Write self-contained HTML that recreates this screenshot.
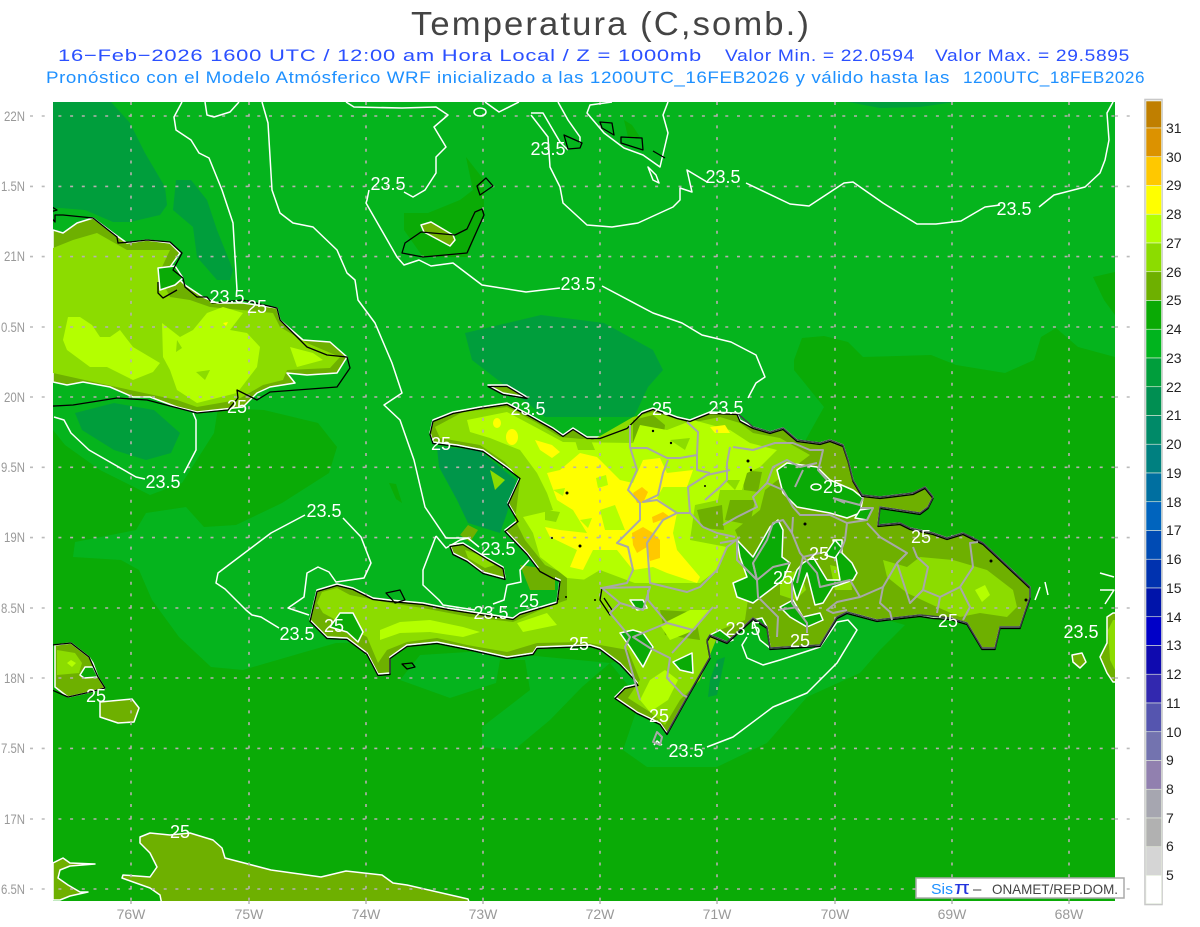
<!DOCTYPE html>
<html><head><meta charset="utf-8"><title>Temperatura</title>
<style>
html,body{margin:0;padding:0;background:#fff;width:1200px;height:927px;overflow:hidden}
svg{display:block;position:absolute;left:0;top:0}
text{font-family:"Liberation Sans",sans-serif}
.w text,.w{fill:#fff;font-size:18px;text-anchor:middle}
.c{fill:none;stroke:#fff;stroke-width:1.5;stroke-linejoin:round}
.f{stroke:#fff;stroke-width:1.5;stroke-linejoin:round}
.k{fill:none;stroke:#000;stroke-width:1.3;stroke-linejoin:round}
.b{fill:none;stroke:#a8a8a8;stroke-width:2;stroke-linejoin:round}
.ax{fill:#999;font-size:14px}
.cb{fill:#222;font-size:14px}
</style></head><body>
<svg width="1200" height="927" viewBox="0 0 1200 927" xmlns="http://www.w3.org/2000/svg">
<defs>
<clipPath id="m"><rect x="53" y="102" width="1062" height="799"/></clipPath>
<path id="hisp" d="M430 433L433 420 453 412 480 407 507 403 530 415 553 428 563 435 573 428 587 437 600 437 627 427 642 412 653 408 677 417 690 420 710 412 737 413 740 420 753 427 770 432 783 428 797 440 820 443 830 440 843 445 848 460 853 480 862 495 880 497 913 493 925 487 933 497 928 507 920 513 880 507 878 525 900 523 910 528 933 533 947 538 963 533 983 543 1030 587 1030 597 1020 627 1000 627 995 648 982 648 967 623 950 618 933 617 920 615 893 618 877 620 847 612 837 617 820 645 770 648 767 627 753 618 727 642 710 635 707 640 710 657 687 697 667 733 660 723 637 712 615 697 625 687 638 684 633 677 620 663 600 648 590 645 537 647 533 653 507 657 467 648 437 642 407 645 390 657 390 673 378 674 367 653 347 638 327 637 310 620 317 590 337 584 353 588 373 598 390 600 423 603 447 608 473 612 513 618 520 613 557 602 560 580 553 577 540 570 527 553 505 530 518 520 508 503 520 477 507 467 483 450 457 445 433 442Z"/>
<path id="cuba" d="M53 230L63 233 77 223 93 218 113 233 127 243 147 240 170 243 180 253 170 267 177 277 185 285 203 297 217 303 243 303 277 308 280 320 303 340 330 342 347 357 337 373 307 375 287 373 295 383 270 387 257 393 243 407 197 412 177 407 150 397 133 397 110 387 83 382 67 385 53 382Z"/>
</defs>
<rect width="1200" height="927" fill="#fff"/>
<g clip-path="url(#m)">
<rect x="53" y="102" width="1062" height="799" fill="#0AAB06"/>
<!-- lighter 23-24 -->
<path fill="#05B41D" d="M53 102L1115 102 1115 357 1078 347 1056 328 1041 337 1034 360 1005 373 956 365 931 355 863 357 848 342 824 336 802 338 794 360 794 370 824 407 800 450 700 620 640 640 500 640 336 643 243 670 211 667 179 637 152 600 139 570 121 560 73 557 75 542 136 530 146 513 186 507 204 527 236 525 282 503 329 473 337 447 318 423 264 410 218 408 214 433 182 483 150 495 100 470 65 445 53 430Z"/>
<path fill="#05B41D" d="M400 680L420 655 500 650 525 655 610 663 640 700 623 750 647 767 717 767 767 743 807 697 860 673 880 650 905 625 860 612 700 640 610 663 582 687 550 720 514 750 482 747 482 727 530 690 525 660 500 660 496 683 450 698Z"/>
<path fill="#0AAB06" d="M1093 277L1115 272 1115 315 1104 300ZM389 483L396 484 402 503 396 499ZM466 157L484 180 484 215 467 257 423 257 404 230 404 213 428 213 460 200 473 190ZM624 120L632 125 640 137 628 137Z"/>
<!-- 22-23 -->
<path fill="#009E3C" d="M53 102L111 102 130 123 145 153 165 187 167 205 160 215 130 222 113 222 85 210 60 208 53 208Z"/>
<path fill="#009E3C" d="M176 180L191 180 207 200 217 230 233 270 230 280 217 280 197 257 193 227 173 210Z"/>
<path fill="#009E3C" d="M75 413L114 403 154 410 180 433 171 453 146 460 114 450 82 430Z"/>
<path fill="#009E3C" d="M465 333L541 315 604 323 653 350 663 370 648 387 634 417 545 417 507 387 472 360Z"/>
<path fill="#00964A" d="M437 447L479 450 516 480 507 513 500 533 468 523 457 500 439 467Z"/>
<path fill="#009E3C" d="M717 660L725 657 717 695 708 697 710 680ZM848 102L955 102 920 107 880 108Z"/>
<!-- level 25 -->
<g fill="#6EB000" class="f">
<use href="#hisp"/><use href="#cuba"/>
<path d="M450 545L463 543 487 558 503 567 505 578 483 572 467 560 453 553Z"/>
<path d="M488 385L507 385 527 397 503 393Z"/>
<path d="M421 225L431 222 453 235 455 240 450 246 424 232Z"/>
<path d="M55 645L71 643 89 657 93 663 98 677 105 688 86 693 68 697 55 687Z"/>
<path d="M100 702L132 699 139 708 134 722 118 723 100 717Z"/>
<path d="M140 837L150 833 170 835 190 833 213 840 222 848 225 858 271 870 321 877 346 871 382 875 393 883 407 885 468 899 470 905 162 905 160 895 150 888 122 878 123 875 150 877 157 867 150 853 140 843Z"/>
<path d="M53 863L63 858 70 863 95 864 70 866 60 870 58 878 68 885 80 892 88 892 70 896 60 900 53 900Z"/>
<path d="M1118 613L1113 613 1107 617 1107 643 1100 657 1107 673 1113 682 1118 682Z"/>
<path d="M1072 655L1082 653 1086 662 1080 668 1073 662Z"/>
</g>
<!-- level 26 -->
<g fill="#8CDC00">
<path d="M53 248L73 240 97 233 127 250 170 250 162 267 163 283 170 297 190 300 210 307 273 313 280 327 307 343 340 357 330 368 287 370 283 380 263 385 237 400 197 407 177 400 130 390 53 373Z"/>
<path d="M435 427L463 412 507 407 537 423 560 437 593 440 633 417 653 412 690 423 720 417 740 423 753 433 780 438 810 455 790 470 765 490 760 510 735 530 745 555 750 585 745 620 720 630 700 680 680 700 665 725 650 712 628 698 640 680 628 650 583 642 537 643 507 652 467 645 437 638 407 642 387 650 378 663 367 637 323 613 317 603 322 592 337 588 350 595 390 603 423 608 470 617 513 622 547 607 567 600 567 575 545 565 525 540 515 520 520 480 505 462 480 445 440 438Z"/>
<path d="M883 560L907 567 920 557 953 560 987 570 1013 590 1017 607 1007 617 980 613 960 617 937 607 907 593 887 577Z"/>
<path d="M57 650L75 653 82 663 79 673 57 675Z"/>
<path d="M1113 620L1108 630 1110 660 1115 670 1118 670 1118 620Z"/>
<path d="M780 575L800 570 806 590 795 600 780 595ZM830 565L850 570 852 590 835 590ZM465 550L480 555 495 565 485 568 468 558Z"/>
</g>
<!-- level 25 patches atop 26 -->
<path fill="#6EB000" d="M633 420L653 415 665 425 663 443 645 445 633 443ZM468 525L478 530 470 542 460 535ZM745 535L765 530 765 560 745 560ZM730 500L755 500 750 525 725 520ZM520 565L555 570 555 590 530 590ZM660 610L695 612 700 640 665 635ZM697 510L722 505 724 530 702 528ZM742 470L762 472 758 492 744 490Z"/>
<!-- level 27 -->
<g fill="#B4FF00">
<path d="M68 317L80 317 92 325 100 337 110 337 120 330 133 347 160 363 153 372 133 380 107 367 90 367 67 350 63 340Z"/>
<path d="M162 323L180 337 193 330 207 313 223 307 243 313 230 330 247 333 260 347 257 367 237 393 197 403 177 390 170 370 163 357Z"/>
<path d="M290 347L313 353 323 360 297 367Z"/>
<path d="M467 420L507 412 537 428 563 442 633 443 640 425 667 430 693 420 730 430 750 443 777 450 760 467 747 473 742 490 720 490 718 500 695 505 690 540 727 547 717 570 700 583 653 583 620 583 567 578 553 567 540 557 533 533 523 517 553 510 547 493 537 473 520 450 490 438 470 432Z"/>
<path d="M380 630L400 622 430 620 463 627 480 632 463 637 430 632 400 633 380 640ZM517 623L547 613 557 625 523 632Z"/>
<path d="M975 590L985 585 990 595 982 602ZM71 660L76 663 72 667 67 663Z"/>
<path d="M640 700L650 680 665 670 678 680 668 700 650 712Z"/>
<path d="M660 625L690 610 710 610 695 630 670 640Z"/>
</g>
<!-- 26 holes inside 27 -->
<path fill="#8CDC00" d="M150 320L156 326 152 333ZM177 340L182 348 176 352ZM196 372L210 370 205 380ZM575 440L590 438 595 450 578 450ZM595 478L603 474 605 485 597 485ZM545 510L560 512 556 522 545 520ZM590 520L605 520 600 535ZM670 440L690 438 685 450ZM725 480L740 480 735 490ZM600 570L640 585 600 592 575 585ZM490 470L505 480 495 490Z"/>
<!-- level 28 -->
<g fill="#FFFF00">
<path d="M547 473L560 470 580 453 597 457 620 480 633 483 643 460 660 458 667 473 693 470 687 487 663 487 657 498 677 513 673 533 677 550 700 577 697 583 667 573 653 567 633 570 617 550 593 550 583 570 570 567 577 550 550 537 545 527 560 530 587 533 573 510 557 500Z"/>
<ellipse cx="497" cy="423" rx="4" ry="5"/><ellipse cx="512" cy="437" rx="6" ry="8"/><path d="M535 440L552 445 560 452 552 458 540 450Z"/><path d="M710 427L725 425 730 433 715 433Z"/><path d="M223 323L228 322 226 326Z"/>
</g>
<path fill="#B4FF00" d="M596 478L606 475 608 485 598 488ZM600 510L615 505 625 530 605 530ZM553 490L565 488 563 496ZM580 520L592 518 588 528Z"/>
<!-- level 29 -->
<path fill="#FFC800" d="M633 493L642 487 648 492 643 503 637 503ZM652 517L663 512 670 517 653 523ZM632 533L643 527 653 533 660 540 660 558 650 561 647 547 637 553 633 545Z"/>
<!-- holes green -->
<g fill="#0AAB06" class="f">
<path d="M777 470L787 463 817 467 830 480 853 490 863 498 860 513 847 518 830 513 797 507 783 493Z"/>
<path d="M737 540L753 557 770 527 778 520 783 530 782 557 790 563 783 580 770 590 753 603 737 597 733 583 747 577 740 557Z"/>
<path d="M803 563L813 557 827 580 840 580 833 540 842 540 842 553 852 563 857 573 853 580 833 587 823 603 815 605 807 573 797 600 792 583 797 570Z"/>
<path d="M780 607L793 600 803 617 820 613 823 620 807 627 790 617Z"/>
<path d="M340 613L353 613 363 632 358 642 347 632 330 627Z"/>
<path d="M620 633L633 630 643 633 653 647 643 667 630 647Z"/>
<path d="M673 662L692 653 693 673 680 670Z"/>
<path d="M630 600L643 600 647 608 637 610Z"/>
<path d="M710 635L720 630 733 640 727 642Z"/>
<path d="M753 620L762 618 767 627 770 648 760 640Z"/>
<path d="M85 667L93 667 98 677 84 678 80 675Z"/>
<ellipse cx="816" cy="487" rx="5" ry="3"/>
<path d="M860 510L873 508 867 520 855 518Z"/>
<path d="M825 555L835 540 842 548 835 558Z"/>
<path d="M158 268L175 266 183 278 175 285 160 290Z"/>
</g>
<!-- grid -->
<g fill="none" stroke="#b8b0b0" stroke-width="1.6" stroke-dasharray="3 8.7">
<path d="M35 116H1135M35 186.4H1135M35 256.6H1135M35 327H1135M35 397H1135M35 467.3H1135M35 537.6H1135M35 608H1135M35 678H1135M35 748.4H1135M35 819H1135M35 889H1135"/>
<path d="M131 102V905M249 102V905M366 102V905M483 102V905M600 102V905M717 102V905M835 102V905M952 102V905M1069 102V905"/>
</g>
<!-- contours -->
<g class="c">
<path d="M182 102L174 117 176 130 191 140 199 153 209 158 222 190 233 223 237 290"/>
<path d="M205 102L207 115 214 117 230 112 239 102"/>
<path d="M262 102L268 123 272 190 280 213 293 223 313 227 337 250 347 273 355 280 358 300 375 323 392 363 402 393 384 405 400 420 414 460 425 507 446 538 468 538 479 547"/>
<path d="M436 536L423 570 423 585 439 600 443 605 475 610M436 536L446 548 460 540 468 538M529 560L520 570 521 582 507 585 504 600 493 604"/>
<path d="M346 102L354 107 402 108 436 107 448 115 434 127 446 147 436 157 436 173 425 190 413 197 404 192"/>
<path d="M369 190L367 200 366 203 397 257 404 265 419 260 431 266 453 263 482 285 526 292 560 288"/>
<path d="M602 286L653 313 682 323 702 335 731 342 756 355 765 377 756 383 748 398"/>
<path d="M485 102L499 112 519 102"/><ellipse cx="480" cy="112" rx="6" ry="4"/>
<path d="M531 113L543 113 560 142 568 150M531 115L548 137 550 167 560 187 563 203 587 225 612 227 638 223 673 207 680 200 680 188 692 192 687 170 707 182"/>
<path d="M746 183L790 204 809 206 844 183 853 182 883 203 917 224 936 224 961 221 985 207 1000 205"/>
<path d="M1039 207L1054 195 1085 187 1100 173 1105 160 1109 140 1107 113 1113 102"/>
<path d="M558 102L568 120 580 137 580 143"/>
<path d="M612 102L590 105 587 113 604 133 624 148 643 155 660 167 668 133 663 115 668 102"/>
<path d="M648 167L656 175 659 183 653 180Z"/>
<path d="M54 417L64 420 71 433 89 450 136 477 145 479"/>
<path d="M184 473L196 450 196 420 193 413"/>
<path d="M305 515L271 533 218 573 216 583 225 589 246 610 252 615 261 617 279 628"/>
<path d="M343 518L361 537 371 563 364 578 350 580 336 582 329 572 318 567 307 573 304 597 288 608 309 615"/>
<path d="M707 747L733 737 773 707 807 693 837 663 857 630 848 620 837 622 820 647 780 660 763 665 747 658 742 645 747 637"/>
<path d="M662 745L657 741 654 745"/>
<path d="M1040 587L1035 600M1045 582L1048 595"/>
<path d="M1100 573L1114 577M1100 590L1114 590 1105 604"/>
</g>
<!-- coast black -->
<g class="k" transform="translate(0,1.5)">
<use href="#hisp"/>
<path d="M450 545L463 543 487 558 503 567 505 578 483 572 467 560 453 553Z"/>
<path d="M488 385L507 385 527 397 503 393Z"/>
</g>
<g class="k">
<path d="M35 202L45 203 57 210 47 213 55 222 55 215 63 215 93 218 117 237 118 243 130 242 147 240 170 242 182 253 173 270 183 278 185 287 197 297 207 297 212 303 243 300 277 308 280 320 307 347 327 355 347 357 350 368 337 387 270 392 257 400 237 390 238 398 228 410 197 413 147 400 117 398 73 405 35 407"/>
<path d="M158 282L158 293 163 298 177 290"/>
<path d="M564 135L582 143 580 148 568 149ZM600 122L612 123 614 135 602 128ZM621 137L642 138 643 150 621 143ZM653 151L665 158"/>
<path d="M486 178L493 186 480 195 477 186Z"/>
<path d="M482 209L484 215 467 253 423 257 402 253 405 243 421 232 455 235 467 229 475 212Z"/>
<path d="M402 664L412 663 415 667 407 669Z"/>
<path d="M35 632L45 640 52 645 71 643 89 657 98 677 105 688 86 693 68 697 52 690 40 680 35 683"/>
<path d="M386 593L400 590 405 600 395 603Z"/>
<path d="M602 588L600 600 610 615 612 610 604 598"/>
</g>
<path fill="none" stroke="#40404c" stroke-width="1.4" d="M737 413L753 427 770 432 783 428 797 440 820 443 830 440 843 445 848 460 853 480 862 495 880 497 913 493 925 487 933 497 928 507 920 513 880 507 878 525 900 523 910 528 933 533 947 538 963 533 983 543 1030 587 1030 597 1020 627 1000 627 995 648 982 648 967 623 950 618 920 615 893 618 877 620 847 612 837 617 820 645 770 648 767 627 753 618 727 642 710 635 707 640 710 657 687 697 667 733"/>
<!-- borders -->
<g class="b">
<path d="M630 425L630 447 637 470 628 490 640 503 640 520 617 543 628 547 633 570 627 583 602 588 620 603 610 613 620 625 630 637 625 647 633 675 640 700"/>
<path d="M630 448L647 448 667 458 680 458 697 455 698 432 687 422M668 460L663 473 658 495 643 502 657 500 677 513 690 513 688 487 707 475 730 470M697 455L697 470 710 473"/>
<path d="M677 513L663 520 647 543 650 583 687 592 700 587 717 570 727 547 740 537M690 513L703 527 717 533 735 537M600 588L650 587 643 610 620 603"/>
<path d="M733 447L753 450 775 443 793 443 810 450 823 450 820 463 818 470 827 480M730 447L727 463 727 480 720 487M773 467L787 460 800 467 817 463M773 467L767 483 753 497 757 507 737 517 723 525M767 483L783 490 793 507 800 515 830 515 847 523M803 470L795 487"/>
<path d="M833 498L860 505 863 498M860 508L873 508 867 520 847 523 845 540 840 553M867 523L880 537 907 553 897 563 883 587 880 603 890 612 892 620M913 547L917 557 928 567 923 590 910 603 897 563M923 590L940 597 937 613M940 597L960 587 973 567 970 543 978 542M960 587L970 607 963 620"/>
<path d="M883 587L860 597 850 580 820 587 817 573 800 553 792 533 783 520 773 523 767 540 753 563 757 580 773 567 790 563M860 597L837 602 827 610 833 613 847 610M793 517L792 533M820 553L803 557 797 583"/>
<path d="M753 563L757 580 758 597 778 617 777 637M737 540L737 560 757 580M720 543L737 540M792 580L792 603 807 623 807 633M778 610L798 607"/>
<path d="M648 590L648 600 667 623 693 630 713 607M667 623L633 637 650 648 670 658 667 678 683 695 687 697M693 630L672 653"/>
<path d="M653 742L657 732 662 737 660 745Z"/>
<path d="M833 498L845 503M720 487L705 500"/>
</g>
<!-- dots -->
<g fill="#000"><circle cx="567" cy="493" r="1.5"/><circle cx="580" cy="546" r="1.5"/><circle cx="552" cy="538" r="1"/><circle cx="653" cy="431" r="1.2"/><circle cx="671" cy="443" r="1.2"/><circle cx="705" cy="486" r="1"/><circle cx="748" cy="461" r="1.5"/><circle cx="751" cy="470" r="1.2"/><circle cx="805" cy="524" r="1.5"/><circle cx="991" cy="561" r="1.5"/><circle cx="1026" cy="600" r="1.5"/><circle cx="558" cy="599" r="1"/><circle cx="566" cy="597" r="1"/><circle cx="595" cy="600" r="1"/></g>
<!-- value labels -->
<g class="w">
<text x="548" y="155">23.5</text><text x="388" y="190">23.5</text><text x="723" y="183">23.5</text><text x="1014" y="215">23.5</text><text x="578" y="290">23.5</text><text x="227" y="303">23.5</text><text x="528" y="415">23.5</text><text x="726" y="414">23.5</text><text x="163" y="488">23.5</text><text x="324" y="517">23.5</text><text x="498" y="555">23.5</text><text x="491" y="619">23.5</text><text x="297" y="640">23.5</text><text x="743" y="635">23.5</text><text x="1081" y="638">23.5</text><text x="686" y="757">23.5</text>
<text x="257" y="313">25</text><text x="237" y="413">25</text><text x="441" y="450">25</text><text x="662" y="415">25</text><text x="833" y="493">25</text><text x="921" y="543">25</text><text x="819" y="560">25</text><text x="783" y="584">25</text><text x="529" y="607">25</text><text x="334" y="632">25</text><text x="579" y="650">25</text><text x="948" y="627">25</text><text x="800" y="647">25</text><text x="96" y="702">25</text><text x="659" y="722">25</text><text x="180" y="838">25</text>
</g>
</g>
<!-- titles -->
<text x="411" y="35" font-size="33" fill="#444" letter-spacing="2" textLength="400" lengthAdjust="spacingAndGlyphs">Temperatura (C,somb.)</text>
<g font-size="17" fill="#2b50ff" letter-spacing="0.6">
<text x="58" y="61" textLength="644" lengthAdjust="spacingAndGlyphs">16−Feb−2026 1600 UTC / 12:00 am Hora Local / Z = 1000mb</text>
<text x="725" y="61" textLength="190" lengthAdjust="spacingAndGlyphs">Valor Min. = 22.0594</text>
<text x="935" y="61" textLength="195" lengthAdjust="spacingAndGlyphs">Valor Max. = 29.5895</text>
</g>
<g font-size="16.5" fill="#1e90ff" letter-spacing="0.5">
<text x="46" y="83" textLength="904" lengthAdjust="spacingAndGlyphs">Pronóstico con el Modelo Atmósferico WRF inicializado a las 1200UTC_16FEB2026 y válido hasta las</text>
<text x="963" y="83" textLength="182" lengthAdjust="spacingAndGlyphs">1200UTC_18FEB2026</text>
</g>
<!-- outer grid dots -->
<g fill="none" stroke="#bbb" stroke-width="1.6" stroke-dasharray="3 8.7">
<path d="M30 116H53M30 186.4H53M30 256.6H53M30 327H53M30 397H53M30 467.3H53M30 537.6H53M30 608H53M30 678H53M30 748.4H53M30 819H53M30 889H53"/>
<path d="M1115 116H1135M1115 186.4H1135M1115 256.6H1135M1115 327H1135M1115 397H1135M1115 467.3H1135M1115 537.6H1135M1115 608H1135M1115 678H1135M1115 748.4H1135M1115 819H1135M1115 889H1135"/>
<path d="M131 901V907M249 901V907M366 901V907M483 901V907M600 901V907M717 901V907M835 901V907M952 901V907M1069 901V907"/>
</g>
<!-- axis labels -->
<g class="ax">
<text x="4" y="121" textLength="21" lengthAdjust="spacingAndGlyphs">22N</text><text x="1" y="191" textLength="24" lengthAdjust="spacingAndGlyphs">1.5N</text><text x="4" y="261" textLength="21" lengthAdjust="spacingAndGlyphs">21N</text><text x="1" y="332" textLength="24" lengthAdjust="spacingAndGlyphs">0.5N</text><text x="4" y="402" textLength="21" lengthAdjust="spacingAndGlyphs">20N</text><text x="1" y="472" textLength="24" lengthAdjust="spacingAndGlyphs">9.5N</text><text x="4" y="542" textLength="21" lengthAdjust="spacingAndGlyphs">19N</text><text x="1" y="613" textLength="24" lengthAdjust="spacingAndGlyphs">8.5N</text><text x="4" y="683" textLength="21" lengthAdjust="spacingAndGlyphs">18N</text><text x="1" y="753" textLength="24" lengthAdjust="spacingAndGlyphs">7.5N</text><text x="4" y="824" textLength="21" lengthAdjust="spacingAndGlyphs">17N</text><text x="1" y="894" textLength="24" lengthAdjust="spacingAndGlyphs">6.5N</text>
</g>
<g class="ax" text-anchor="middle">
<text x="131" y="919">76W</text><text x="249" y="919">75W</text><text x="366" y="919">74W</text><text x="483" y="919">73W</text><text x="600" y="919">72W</text><text x="717" y="919">71W</text><text x="835" y="919">70W</text><text x="952" y="919">69W</text><text x="1069" y="919">68W</text>
</g>
<!-- colorbar -->
<rect x="1145" y="99.5" width="17" height="805" fill="#fff" stroke="#c8c8c8" stroke-width="1.6"/>
<g stroke="#e8f0e0" stroke-width=".6">
<rect x="1146" y="101" width="15.5" height="27" fill="#C07F00"/>
<rect x="1146" y="128" width="15.5" height="28.75" fill="#DC9200"/>
<rect x="1146" y="156.75" width="15.5" height="28.75" fill="#FFC800"/>
<rect x="1146" y="185.5" width="15.5" height="28.75" fill="#FFFF00"/>
<rect x="1146" y="214.25" width="15.5" height="28.75" fill="#B4FF00"/>
<rect x="1146" y="243" width="15.5" height="28.75" fill="#8CDC00"/>
<rect x="1146" y="271.75" width="15.5" height="28.75" fill="#6EB000"/>
<rect x="1146" y="300.5" width="15.5" height="28.75" fill="#0AAA05"/>
<rect x="1146" y="329.25" width="15.5" height="28.75" fill="#00B41E"/>
<rect x="1146" y="358" width="15.5" height="28.75" fill="#009E3C"/>
<rect x="1146" y="386.75" width="15.5" height="28.75" fill="#008F52"/>
<rect x="1146" y="415.5" width="15.5" height="28.75" fill="#008A68"/>
<rect x="1146" y="444.25" width="15.5" height="28.75" fill="#008080"/>
<rect x="1146" y="473" width="15.5" height="28.75" fill="#006FA0"/>
<rect x="1146" y="501.75" width="15.5" height="28.75" fill="#0064BE"/>
<rect x="1146" y="530.5" width="15.5" height="28.75" fill="#004BB4"/>
<rect x="1146" y="559.25" width="15.5" height="28.75" fill="#0032AF"/>
<rect x="1146" y="588" width="15.5" height="28.75" fill="#0014AA"/>
<rect x="1146" y="616.75" width="15.5" height="28.75" fill="#0000C8"/>
<rect x="1146" y="645.5" width="15.5" height="28.75" fill="#0F0AAF"/>
<rect x="1146" y="674.25" width="15.5" height="28.75" fill="#3228AF"/>
<rect x="1146" y="703" width="15.5" height="28.75" fill="#5555AF"/>
<rect x="1146" y="731.75" width="15.5" height="28.75" fill="#7373AF"/>
<rect x="1146" y="760.5" width="15.5" height="28.75" fill="#9180AF"/>
<rect x="1146" y="789.25" width="15.5" height="28.75" fill="#A6A6B0"/>
<rect x="1146" y="818" width="15.5" height="28.75" fill="#B1B1B1"/>
<rect x="1146" y="846.75" width="15.5" height="28.75" fill="#D5D5D5"/>
<rect x="1146" y="875.5" width="15.5" height="28" fill="#fff"/>
</g>
<g class="cb">
<text x="1166" y="133">31</text><text x="1166" y="162">30</text><text x="1166" y="190">29</text><text x="1166" y="219">28</text><text x="1166" y="248">27</text><text x="1166" y="277">26</text><text x="1166" y="305">25</text><text x="1166" y="334">24</text><text x="1166" y="363">23</text><text x="1166" y="392">22</text><text x="1166" y="420">21</text><text x="1166" y="449">20</text><text x="1166" y="478">19</text><text x="1166" y="507">18</text><text x="1166" y="535">17</text><text x="1166" y="564">16</text><text x="1166" y="593">15</text><text x="1166" y="622">14</text><text x="1166" y="650">13</text><text x="1166" y="679">12</text><text x="1166" y="708">11</text><text x="1166" y="737">10</text><text x="1166" y="765">9</text><text x="1166" y="794">8</text><text x="1166" y="823">7</text><text x="1166" y="851">6</text><text x="1166" y="880">5</text>
</g>
<!-- logo -->
<rect x="916" y="878" width="208" height="20" fill="#fff" stroke="#aaa" stroke-width="1.5"/>
<text x="931" y="894" font-size="15" fill="#1e90ff" textLength="22" lengthAdjust="spacingAndGlyphs">Sis</text>
<text x="954" y="894" font-size="18" fill="#2233dd" textLength="16" lengthAdjust="spacingAndGlyphs">π</text>
<text x="973" y="894" font-size="15" fill="#444">–</text>
<text x="992" y="894" font-size="14" fill="#444" textLength="126" lengthAdjust="spacingAndGlyphs">ONAMET/REP.DOM.</text>
</svg>
</body></html>
